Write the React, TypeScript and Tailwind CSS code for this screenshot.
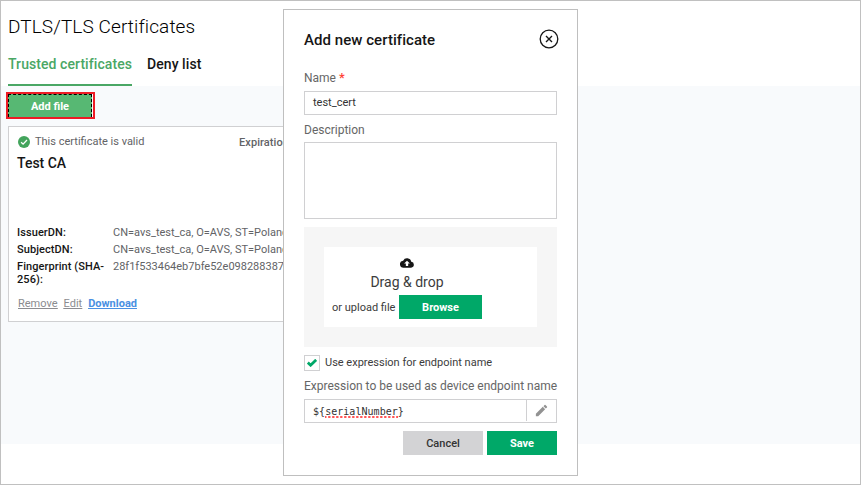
import React from "react";

const details = [
  { label: "IssuerDN:", value: "CN=avs_test_ca, O=AVS, ST=Poland" },
  { label: "SubjectDN:", value: "CN=avs_test_ca, O=AVS, ST=Poland" },
  { label: "Fingerprint (SHA-256):", value: "28f1f533464eb7bfe52e098288387a" },
];

function CertificateCard() {
  return (
    <article className="mt-[7px] h-[196px] w-[400px] border border-[#d0d0d2] bg-white px-2 pt-[8px]">
      <div className="flex h-[14px] items-center">
        <svg viewBox="0 0 12 12" className="ml-[1px] size-3 shrink-0">
          <circle cx="6" cy="6" r="6" fill="#43a45c" />
          <path d="M3.1 6.2 5.1 8.1 9 4" fill="none" stroke="#fff" strokeWidth="1.3" />
        </svg>
        <span className="ml-[5px] w-[204px] text-[11px] leading-[14px] text-[#626366]">This certificate is valid</span>
        <span className="mt-[2px] text-[11px] font-medium leading-[14px] tracking-[0.08px] text-[#626366]">Expiration date</span>
      </div>
      <h2 className="mt-[5px] text-[14px] font-medium leading-[18px] text-[#161616]">Test CA</h2>
      <dl className="mt-[54px] text-[11px] leading-[13px]">
        {details.map((d) => (
          <div key={d.label} className="mb-1 flex">
            <dt className="w-24 shrink-0 font-medium tracking-[0.08px] text-[#161616]">{d.label}</dt>
            <dd className="whitespace-nowrap text-[#626366]">{d.value}</dd>
          </div>
        ))}
      </dl>
      <div className="mt-[11px] flex gap-[6px] pl-[1px] text-[11px] leading-[14px] text-[#8b8c90] underline underline-offset-1">
        <a>Remove</a>
        <a>Edit</a>
        <a className="font-bold text-[#4a90e2]">Download</a>
      </div>
    </article>
  );
}

function AddCertificateDialog() {
  return (
    <section className="absolute left-[283px] top-[9px] h-[467px] w-[295px] border border-[#bfbfbf] bg-white px-5 text-[#666]">
      <header className="flex h-[58px] items-center justify-between">
        <h2 className="mt-[1px] text-[15px] font-medium leading-5 tracking-[0.05px] text-[#161616]">Add new certificate</h2>
        <svg viewBox="0 0 20 20" className="-mr-[2px] size-5" fill="none" stroke="#161616">
          <circle cx="10" cy="10" r="8.8" strokeWidth="1.3" />
          <path d="m7 7 6 6m0-6-6 6" strokeWidth="1.4" />
        </svg>
      </header>
      <label className="mt-[2px] block text-[12px] leading-4">
        Name<span className="ml-[3px] text-[13px] font-medium leading-none text-[#ff4336]">*</span>
      </label>
      <div className="mt-[5px] h-6 border border-[#d0d0d2] pl-2 text-[11px] leading-[21px] text-[#333]">test_cert</div>
      <label className="mt-[7px] block text-[12px] leading-4">Description</label>
      <div className="mt-[4px] h-[77px] border border-[#d0d0d2]" />
      <div className="mt-2 h-[120px] bg-[#f6f6f6] p-5">
        <div className="h-20 w-[213px] bg-white pl-2 pt-[9px] text-[#3c3c3c]">
          <div className="flex w-[150px] flex-col items-center">
            <svg viewBox="0 0 24 24" className="size-[14px]" fill="#161616">
              <path d="M19.35 10.04A7.49 7.49 0 0 0 5.35 8.04 5.994 5.994 0 0 0 6 20h13a5 5 0 0 0 .35-9.96zM14 13v4h-4v-4H7l5-5 5 5z" />
            </svg>
            <span className="mt-[3px] text-[14px] leading-[18px]">Drag &amp; drop</span>
          </div>
          <div className="mt-1 flex h-6 items-center">
            <span className="mt-[2px] w-[67px] whitespace-nowrap text-[11px]">or upload file</span>
            <button className="h-6 w-[83px] bg-[#00a868] pt-[2px] text-[11px] font-bold text-white">Browse</button>
          </div>
        </div>
      </div>
      <div className="mt-2 flex h-4 items-center">
        <span className="flex size-4 shrink-0 items-center justify-center border border-[#d0d0d2]">
          <svg viewBox="0 0 10 8" className="h-2 w-[10px]" fill="none" stroke="#00a868" strokeWidth="2.8">
            <path d="M.8 3.6 3.6 6.2 9.2.8" />
          </svg>
        </span>
        <span className="ml-[5px] whitespace-nowrap text-[11px] leading-[14px] text-[#3c3c3c]">Use expression for endpoint name</span>
      </div>
      <label className="mt-[7px] block whitespace-nowrap text-[12px] leading-4">Expression to be used as device endpoint name</label>
      <div className="mt-[5px] flex h-6 border border-[#d0d0d2]">
        <div className="w-[221px] pl-2 pt-px font-['DejaVu_Sans_Mono',monospace] text-[10px] leading-[22px] tracking-[0.04px] text-[#333]">
          {"${"}
          <span className="bg-[linear-gradient(45deg,transparent_35%,#f22_35%,#f22_65%,transparent_65%),linear-gradient(-45deg,transparent_35%,#f22_35%,#f22_65%,transparent_65%)] bg-[length:4px_2px] bg-bottom bg-repeat-x pb-px">serialNumber</span>
          {"}"}
        </div>
        <div className="flex h-[21px] flex-1 items-center justify-center border-l border-[#d0d0d2] pr-px">
          <svg viewBox="0 0 24 24" className="size-[15px]" fill="#929292">
            <path d="M3 17.25V21h3.75L17.81 9.94l-3.75-3.75zM20.71 7.04a1 1 0 0 0 0-1.41l-2.34-2.34a1 1 0 0 0-1.41 0l-1.83 1.83 3.75 3.75z" />
          </svg>
        </div>
      </div>
      <footer className="mt-2 flex justify-end gap-1 text-[11px]">
        <button className="h-6 w-20 bg-[#d3d3d5] pt-[2px] font-medium text-[#333]">Cancel</button>
        <button className="h-6 w-[70px] bg-[#00a868] pt-[2px] font-bold text-white">Save</button>
      </footer>
    </section>
  );
}

export default function App() {
  return (
    <div className="relative h-[485px] w-[861px] overflow-hidden border border-[#c0c0c0] bg-white font-[Roboto,sans-serif]">
      <main>
        <div className="h-[85px] px-[7px] pt-[14px]">
          <h1 className="text-[19px] font-light leading-6 tracking-[0.1px] text-black">DTLS/TLS Certificates</h1>
          <nav className="mt-[15px] flex gap-[15px] text-[14px] font-medium leading-5">
            <span className="h-8 w-[124px] whitespace-nowrap border-b-2 border-[#4aa765] tracking-[0.07px] text-[#4aa765]">Trusted certificates</span>
            <span className="tracking-[0.07px] text-[#161616]">Deny list</span>
          </nav>
        </div>
        <div className="h-[358px] bg-[#f8fafc] pt-[6px]">
          <div className="ml-[5px] h-[27px] w-[89px] border-2 border-[#ed1c24]">
            <button className="block h-[23px] w-[84px] border border-b-0 border-dashed border-black bg-[#57b873] pt-[2px] text-[11px] font-bold text-white">Add file</button>
          </div>
          <div className="pl-[7px]">
            <CertificateCard />
          </div>
        </div>
      </main>
      <div className="absolute inset-0 -left-px -top-px">
        <AddCertificateDialog />
      </div>
    </div>
  );
}
